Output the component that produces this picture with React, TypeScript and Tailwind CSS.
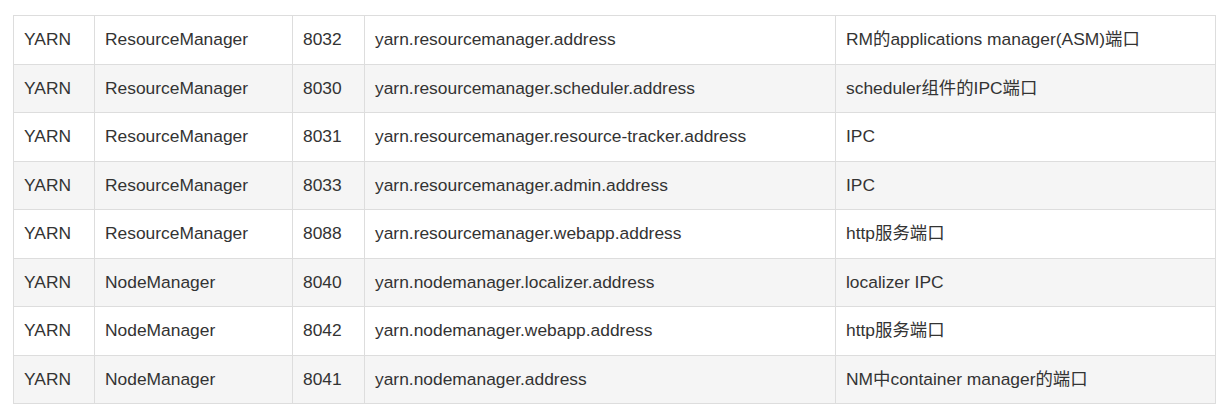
const rows = [
  ["YARN", "ResourceManager", "8032", "yarn.resourcemanager.address", "RM的applications manager(ASM)端口"],
  ["YARN", "ResourceManager", "8030", "yarn.resourcemanager.scheduler.address", "scheduler组件的IPC端口"],
  ["YARN", "ResourceManager", "8031", "yarn.resourcemanager.resource-tracker.address", "IPC"],
  ["YARN", "ResourceManager", "8033", "yarn.resourcemanager.admin.address", "IPC"],
  ["YARN", "ResourceManager", "8088", "yarn.resourcemanager.webapp.address", "http服务端口"],
  ["YARN", "NodeManager", "8040", "yarn.nodemanager.localizer.address", "localizer IPC"],
  ["YARN", "NodeManager", "8042", "yarn.nodemanager.webapp.address", "http服务端口"],
  ["YARN", "NodeManager", "8041", "yarn.nodemanager.address", "NM中container manager的端口"],
];

export default function App() {
  return (
    <div
      className="min-h-[416px] bg-white pl-[13px] pt-[15px] text-[17.4px] text-[#333]"
      style={{ fontFamily: '"Liberation Sans", Arial, "Noto Sans CJK SC", sans-serif' }}
    >
      <table className="table-fixed border-collapse w-[1202px]">
        <colgroup>
          <col className="w-[81px]" />
          <col className="w-[198px]" />
          <col className="w-[72px]" />
          <col className="w-[471px]" />
          <col className="w-[380px]" />
        </colgroup>
        <tbody>
          {rows.map((row, i) => (
            <tr key={i} className={i % 2 === 1 ? "bg-[#f5f5f5]" : "bg-white"}>
              {row.map((cell, j) => (
                <td
                  key={j}
                  className="border border-[#dddddd] px-[10px] py-[10px] leading-[27.5px] whitespace-nowrap align-middle"
                >
                  {cell}
                </td>
              ))}
            </tr>
          ))}
        </tbody>
      </table>
    </div>
  );
}
